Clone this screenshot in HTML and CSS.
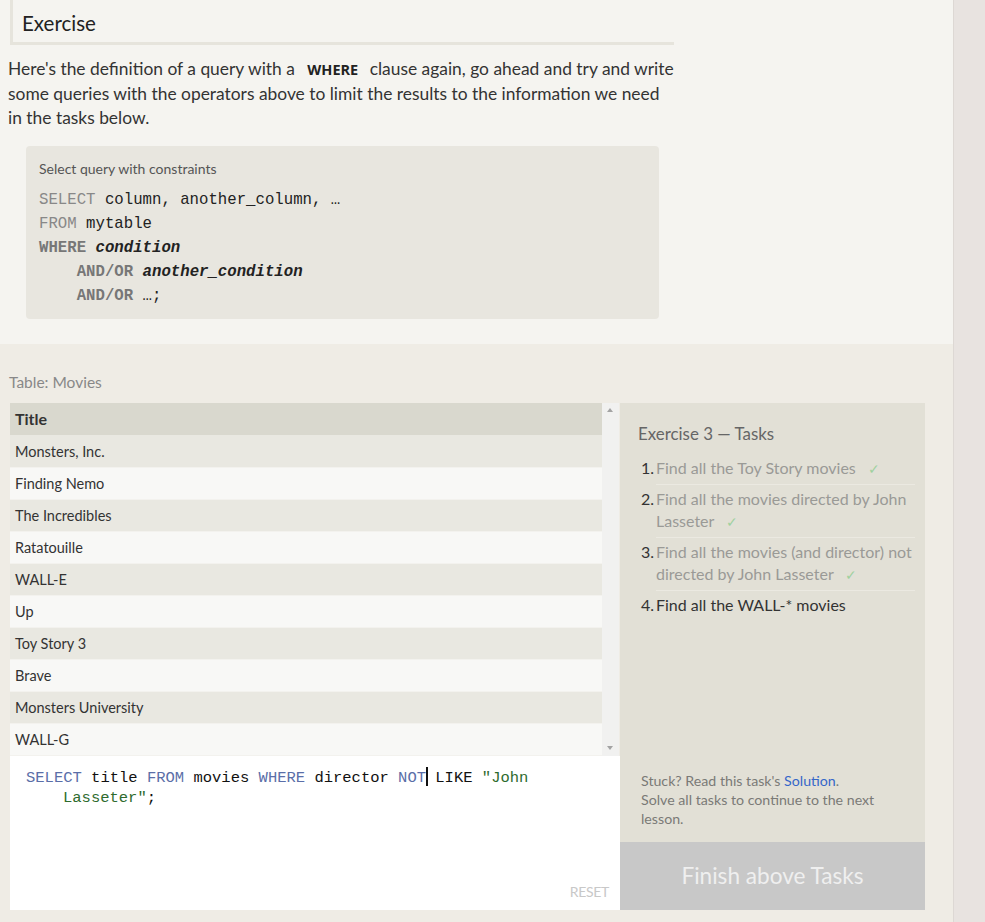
FILE: index.html
```html
<!DOCTYPE html>
<html>
<head>
<meta charset="utf-8">
<link rel="stylesheet" href="styles.css">
</head>
<body>
<div class="page">
  <div class="main">
    <section class="lesson">
      <h2 class="exercise-title">Exercise</h2>
      <p class="intro">Here's the definition of a query with a <strong class="kw-inline">WHERE</strong> clause again, go ahead and try and write some queries with the operators above to limit the results to the information we need in the tasks below.</p>
      <div class="syntax">
        <div class="syntax-caption">Select query with constraints</div>
        <pre class="syntax-code"><span class="k">SELECT</span> column, another_column, …
<span class="k">FROM</span> mytable
<span class="kb">WHERE</span> <em>condition</em>
    <span class="kb">AND/OR</span> <em>another_condition</em>
    <span class="kb">AND/OR</span> …;</pre>
      </div>
    </section>
    <section class="workspace">
      <div class="table-label">Table: Movies</div>
      <div class="work-grid">
        <div class="left-col">
          <div class="table-wrap">
            <div class="table">
              <div class="row head">Title</div>
              <div class="row odd">Monsters, Inc.</div>
              <div class="row even">Finding Nemo</div>
              <div class="row odd">The Incredibles</div>
              <div class="row even">Ratatouille</div>
              <div class="row odd">WALL-E</div>
              <div class="row even">Up</div>
              <div class="row odd">Toy Story 3</div>
              <div class="row even">Brave</div>
              <div class="row odd">Monsters University</div>
              <div class="row even">WALL-G</div>
            </div>
            <div class="scrollbar">
              <span class="arrow up"></span>
              <span class="arrow down"></span>
            </div>
          </div>
          <div class="editor">
            <div class="editor-code"><span class="sk">SELECT</span> title <span class="sk">FROM</span> movies <span class="sk">WHERE</span> director <span class="sk">NOT</span><span class="caret"></span> LIKE <span class="str">"John</span></div>
            <div class="editor-code wrap"><span class="str">Lasseter"</span>;</div>
            <div class="reset">RESET</div>
          </div>
        </div>
        <div class="right-col">
          <div class="tasks">
            <h3 class="tasks-title">Exercise 3 — Tasks</h3>
            <ol class="task-list">
              <li class="done"><span class="num">1.</span><span class="txt">Find all the Toy Story movies <span class="check">✓</span></span></li>
              <li class="done"><span class="num">2.</span><span class="txt">Find all the movies directed by John Lasseter <span class="check">✓</span></span></li>
              <li class="done"><span class="num">3.</span><span class="txt">Find all the movies (and director) not directed by John Lasseter <span class="check">✓</span></span></li>
              <li class="current"><span class="num">4.</span><span class="txt">Find all the WALL-* movies</span></li>
            </ol>
            <div class="stuck">Stuck? Read this task's <a class="solution">Solution</a>.<br>Solve all tasks to continue to the next lesson.</div>
          </div>
          <div class="finish">Finish above Tasks</div>
        </div>
      </div>
    </section>
  </div>
  <div class="side"></div>
</div>
</body>
</html>
```
FILE: styles.css
```css
html, body {
  margin: 0;
  padding: 0;
}
body {
  font-family: "Lato", "Open Sans", sans-serif;
  color: #333;
  background: #efece5;
}
.page {
  display: flex;
  width: 985px;
  height: 922px;
  overflow: hidden;
}
.main {
  width: 953px;
  display: flex;
  flex-direction: column;
}
.side {
  width: 31px;
  border-left: 1px solid #ddd8d4;
  background: #e8e3e0;
}
.lesson {
  background: #f5f4f0;
  padding: 0 0 26px 8px;
  height: 318px;
}
.exercise-title {
  margin: 0 0 0 2px;
  width: 652px;
  height: 42px;
  border-left: 3px solid #e6e4dc;
  border-bottom: 3px solid #e6e4dc;
  font-weight: 400;
  font-size: 20.5px;
  line-height: 46px;
  padding-left: 9px;
  color: #222;
  box-sizing: content-box;
}
.intro {
  margin: 12px 0 0 0;
  width: 667px;
  font-size: 17.4px;
  line-height: 24px;
  color: #333;
}
.kw-inline {
  font-family: "Open Sans", sans-serif;
  font-size: 14.5px;
  font-weight: 700;
  margin: 0 7px 0 8px;
  color: #222;
}
.syntax {
  margin: 16px 0 0 18px;
  width: 607px;
  height: 147px;
  background: #e8e6df;
  border-radius: 4px;
  padding: 14px 13px 12px 13px;
}
.syntax-caption {
  font-size: 14px;
  color: #555;
  line-height: 18px;
}
.syntax-code {
  margin: 10px 0 0 0;
  font-family: "Liberation Mono", monospace;
  font-size: 15.7px;
  line-height: 24px;
  color: #222;
}
.syntax-code .k {
  color: #888;
}
.syntax-code .kb {
  color: #777;
  font-weight: 700;
}
.syntax-code em {
  font-weight: 700;
  font-style: italic;
  color: #222;
}
.workspace {
  flex: 1;
  background: #efece5;
  padding: 26px 0 0 10px;
}
.table-label {
  font-size: 15.5px;
  color: #888;
  line-height: 24px;
  margin-left: -1px;
}
.work-grid {
  display: flex;
  margin-top: 9px;
}
.left-col {
  width: 610px;
  display: flex;
  flex-direction: column;
}
.table-wrap {
  display: flex;
  height: 353px;
}
.table {
  width: 592px;
}
.row {
  height: 31px;
  border-bottom: 1px solid #f3f2ee;
  line-height: 31px;
  padding-left: 5px;
  font-size: 14.5px;
  color: #333;
}
.row.head {
  height: 32px;
  line-height: 32px;
  background: #d9d8ce;
  font-weight: 700;
  font-size: 16px;
  border-bottom: 1px solid #e9e8e1;
}
.row.odd {
  background: #e9e8e1;
}
.row.even {
  background: #f8f8f6;
}
.scrollbar {
  width: 17px;
  background: #f1f1f0;
  position: relative;
}
.arrow {
  position: absolute;
  left: 5px;
  width: 0;
  height: 0;
  border-left: 3.5px solid transparent;
  border-right: 3.5px solid transparent;
}
.arrow.up {
  top: 5px;
  border-bottom: 4px solid #a3a3a3;
}
.arrow.down {
  bottom: 6px;
  border-top: 4px solid #a3a3a3;
}
.editor {
  height: 154px;
  background: #fff;
  padding: 11px 0 0 16px;
  box-sizing: border-box;
  position: relative;
}
.editor-code {
  font-family: "Liberation Mono", monospace;
  font-size: 15.5px;
  line-height: 20px;
  color: #111;
  white-space: pre;
}
.editor-code.wrap {
  padding-left: 37px;
}
.sk {
  color: #5a6ea8;
}
.str {
  color: #2e6b2e;
}
.caret {
  display: inline-block;
  width: 2px;
  height: 19px;
  background: #111;
  vertical-align: -4px;
  margin-right: -2px;
}
.reset {
  position: absolute;
  right: 11px;
  bottom: 10px;
  font-size: 14px;
  color: #c8c8c8;
  letter-spacing: -0.3px;
}
.right-col {
  width: 305px;
  display: flex;
  flex-direction: column;
}
.tasks {
  flex: 1;
  background: #e2e0d6;
  padding: 20px 10px 0 18px;
  position: relative;
}
.tasks-title {
  margin: 0;
  font-weight: 400;
  font-size: 16.9px;
  line-height: 22px;
  color: #666;
}
.task-list {
  list-style: none;
  margin: 12px 0 0 0;
  padding: 0;
}
.task-list li {
  display: flex;
  font-size: 16px;
  line-height: 22px;
}
.task-list .num {
  width: 15px;
  padding-left: 3px;
  flex-shrink: 0;
  color: #333;
}
.task-list .txt {
  flex: 1;
  padding: 0 0 4px 0;
  border-bottom: 1px solid #ebe9e1;
  margin-bottom: 3px;
}
.task-list li:last-child .txt {
  border-bottom: none;
}
.task-list .done .txt {
  color: #9a9a96;
}
.task-list .current .txt {
  color: #333;
}
.check {
  color: #9fd19f;
  font-size: 14px;
  margin-left: 8px;
}
.stuck {
  position: absolute;
  left: 21px;
  bottom: 14px;
  width: 245px;
  font-size: 14.2px;
  line-height: 19px;
  color: #7a7a76;
}
.solution {
  color: #3567c9;
}
.finish {
  height: 68px;
  background: #c8c8c8;
  color: #efefef;
  font-size: 22.6px;
  line-height: 68px;
  text-align: center;
}
```
